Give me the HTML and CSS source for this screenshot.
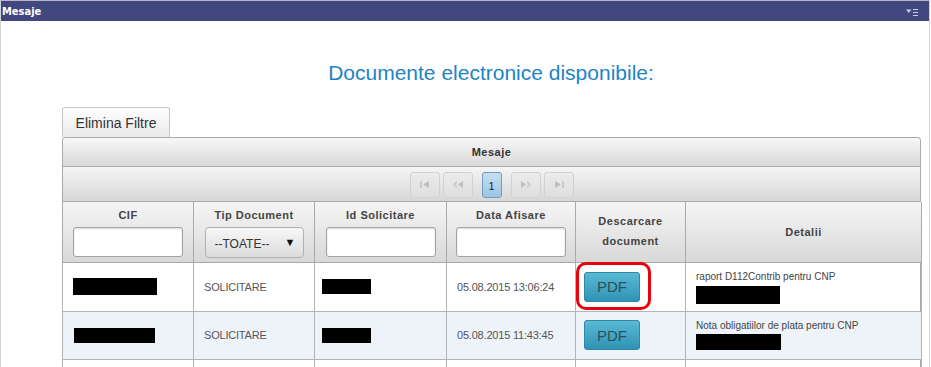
FILE: index.html
```html
<!DOCTYPE html>
<html>
<head>
<meta charset="utf-8">
<link rel="stylesheet" href="styles.css">
</head>
<body>
<div class="panel">
  <div class="panel-bar">
    <span class="panel-title">Mesaje</span>
    <svg class="panel-icon" width="12" height="8" viewBox="0 0 12 8"><path d="M0 1.5h5.5l-2.75 3.5z" fill="#c9cbe6"/><path d="M7 1.5h5M7 4.5h5M7 7.5h5" stroke="#c9cbe6" stroke-width="1"/></svg>
  </div>
  <div class="panel-body">
    <h1 class="page-title">Documente electronice disponibile:</h1>
    <button class="btn-clear">Elimina Filtre</button>
    <div class="dt">
      <div class="dt-header">Mesaje</div>
      <div class="dt-pager">
        <span class="pg-btn"><svg width="10" height="7" viewBox="0 0 10 7"><path d="M1 0v7" stroke="#b9c0c8" stroke-width="1.4"/><path d="M9 0v7L3 3.5z" fill="#b9c0c8"/></svg></span>
        <span class="pg-btn"><svg width="12" height="7" viewBox="0 0 12 7"><path d="M5 1L2 3.5 5 6" stroke="#b9c0c8" stroke-width="1.2" fill="none"/><path d="M11 0v7L6 3.5z" fill="#b9c0c8"/></svg></span>
        <span class="pg-page">1</span>
        <span class="pg-btn"><svg width="12" height="7" viewBox="0 0 12 7"><path d="M1 0v7L6 3.5z" fill="#b9c0c8"/><path d="M7 1l3 2.5L7 6" stroke="#b9c0c8" stroke-width="1.2" fill="none"/></svg></span>
        <span class="pg-btn"><svg width="10" height="7" viewBox="0 0 10 7"><path d="M1 0v7L7 3.5z" fill="#b9c0c8"/><path d="M9 0v7" stroke="#b9c0c8" stroke-width="1.4"/></svg></span>
      </div>
      <table class="grid">
        <colgroup>
          <col class="c-cif"><col class="c-tip"><col class="c-id"><col class="c-data"><col class="c-desc"><col class="c-det">
        </colgroup>
        <thead>
          <tr>
            <th><div class="th-label">CIF</div><input class="filter" type="text"></th>
            <th><div class="th-label">Tip Document</div><div class="select"><span>--TOATE--</span><span class="arrow">&#9660;</span></div></th>
            <th><div class="th-label">Id Solicitare</div><input class="filter" type="text"></th>
            <th><div class="th-label">Data Afisare</div><input class="filter" type="text"></th>
            <th><div class="th-two">Descarcare<br>document</div></th>
            <th><div class="th-label">Detalii</div></th>
          </tr>
        </thead>
        <tbody>
          <tr>
            <td><span class="redact r-cif1"></span></td>
            <td class="txt">SOLICITARE</td>
            <td class="pad-s"><span class="redact r-id"></span></td>
            <td class="txt">05.08.2015 13:06:24</td>
            <td class="pdf-cell"><div class="pdf-wrap"><button class="pdf">PDF</button><span class="mark"></span></div></td>
            <td class="det"><div>raport D112Contrib pentru CNP</div><span class="redact r-det1"></span></td>
          </tr>
          <tr class="alt">
            <td><span class="redact r-cif2"></span></td>
            <td class="txt">SOLICITARE</td>
            <td class="pad-s"><span class="redact r-id"></span></td>
            <td class="txt">05.08.2015 11:43:45</td>
            <td class="pdf-cell"><div class="pdf-wrap"><button class="pdf">PDF</button></div></td>
            <td class="det"><div>Nota obligatiilor de plata pentru CNP</div><span class="redact r-det2"></span></td>
          </tr>
          <tr class="last">
            <td></td><td></td><td></td><td></td><td></td><td></td>
          </tr>
        </tbody>
      </table>
    </div>
  </div>
</div>
</body>
</html>
```

FILE: styles.css
```css
* { box-sizing: border-box; }
html, body { margin: 0; padding: 0; background: #fff; }
body { font-family: "Liberation Sans", Arial, sans-serif; color: #333; width: 931px; height: 367px; overflow: hidden; }

.panel { width: 930px; border: 1px solid #d0d0d0; border-top-color: #b8b8c8; min-height: 367px; }
.panel-bar { height: 20px; background: #434780; display: flex; align-items: center; justify-content: space-between; padding: 0 11px 0 1px; }
.panel-title { font-family: "DejaVu Sans Condensed", "DejaVu Sans", sans-serif; font-weight: bold; font-size: 11px; color: #fff; }
.panel-icon { display: block; margin-top: 1px; }

.panel-body { padding: 0 9px 0 61px; }
.page-title { margin: 39px 0 0; height: 47px; font-weight: normal; font-size: 21px; line-height: 26px; color: #1e83c6; text-align: center; }

.btn-clear { display: block; font-family: "Liberation Sans", Arial, sans-serif; font-size: 14px; color: #333; height: 30px; width: 108px; padding: 0; border: 1px solid #c8c8c8; border-bottom: none; border-radius: 3px 3px 0 0; background: linear-gradient(#ffffff, #e9e9e9); }

.dt { width: 859px; border: 1px solid #a9a9a9; border-radius: 4px 4px 0 0; border-bottom: none; }
.dt-header { height: 29px; line-height: 29px; text-align: center; font-size: 11px; font-weight: bold; letter-spacing: 0.5px; color: #333; background: linear-gradient(#f7f7f7, #d9d9d9); border-bottom: 1px solid #a9a9a9; border-radius: 4px 4px 0 0; }
.dt-pager { height: 35px; display: flex; align-items: center; justify-content: center; gap: 3px; background: linear-gradient(#f5f5f5, #d7d7d7); border-bottom: 1px solid #a9a9a9; padding-top: 1px; }
.pg-btn { width: 30px; height: 26px; border: 1px solid #d2d2d2; border-radius: 3px; background: linear-gradient(#ececec, #dedede); display: flex; align-items: center; justify-content: center; }
.pg-page { width: 20px; height: 26px; margin: 0 6px; border: 1px solid #6f9cc2; border-radius: 3px; background: linear-gradient(#c6dff0, #9cc4e2); font-size: 11px; color: #222; display: flex; align-items: center; justify-content: center; padding-top: 3px; }

.grid { border-collapse: collapse; width: 859px; table-layout: fixed; margin-left: -1px; }
.c-cif { width: 131px; } .c-tip { width: 121px; } .c-id { width: 132px; } .c-data { width: 129px; } .c-desc { width: 110px; } .c-det { width: 236px; }
.grid th { height: 60px; border: 1px solid #a9a9a9; border-top: none; background: linear-gradient(#f5f5f5, #d8d8d8); font-size: 11px; font-weight: bold; letter-spacing: 0.5px; color: #444; vertical-align: top; padding: 6px 0 0; text-align: center; }
.th-label { height: 18px; line-height: 14px; }
.grid th:last-child .th-label, .grid th:nth-child(5) .th-label { margin-top: 17px; }
.th-two { line-height: 20px; margin-top: 3px; }
.filter { display: block; margin: 1px auto 0; width: 110px; height: 30px; border: 1px solid #a2a2a2; border-radius: 3px; background: #fff; box-shadow: inset 0 1px 2px rgba(0,0,0,0.15); }
.select { margin: 1px auto 0; width: 99px; height: 31px; border: 1px solid #b0b0b0; border-radius: 4px; background: linear-gradient(#f7f7f7, #dcdcdc); display: flex; align-items: center; justify-content: space-between; padding: 2px 7px 0 9px; font-weight: normal; letter-spacing: 0; font-size: 12px; color: #333; }
.select .arrow { font-size: 11px; color: #111; margin-top: -4px; }

.grid td { height: 49px; border: 1px solid #b4b4b4; padding: 0 10px; vertical-align: middle; font-size: 11px; color: #555; }
.grid td.pad-s { padding-left: 7px; }
.grid td.txt { letter-spacing: -0.2px; }
.grid tr.alt td { background: #eef3f9; height: 48px; }
.grid tr.last td { height: 20px; }
.redact { display: block; background: #000; }
.r-cif1 { width: 84px; height: 17px; }
.r-cif2 { width: 81px; height: 15px; margin-left: 1px; }
.r-id { width: 49px; height: 15px; }
.r-det1 { width: 84px; height: 18px; margin-top: 4px; }
.r-det2 { width: 85px; height: 16px; margin-top: 3px; }
.grid td.det { font-size: 10px; padding-left: 10px; color: #444; vertical-align: top; padding-top: 8px; }

.grid td.pdf-cell { padding: 0 0 0 8px; }
.pdf-wrap { position: relative; width: 56px; height: 30px; }
.pdf { width: 56px; height: 30px; padding: 0; border: 1px solid #2d88a7; border-radius: 3px; background: linear-gradient(#5ab9d5, #2f93b3); font-family: "Liberation Sans", Arial, sans-serif; font-size: 15px; color: #2c4e5b; }
.mark { position: absolute; left: -8px; top: -10px; width: 75px; height: 48px; border: 3px solid #e8000b; border-radius: 10px; }
```
